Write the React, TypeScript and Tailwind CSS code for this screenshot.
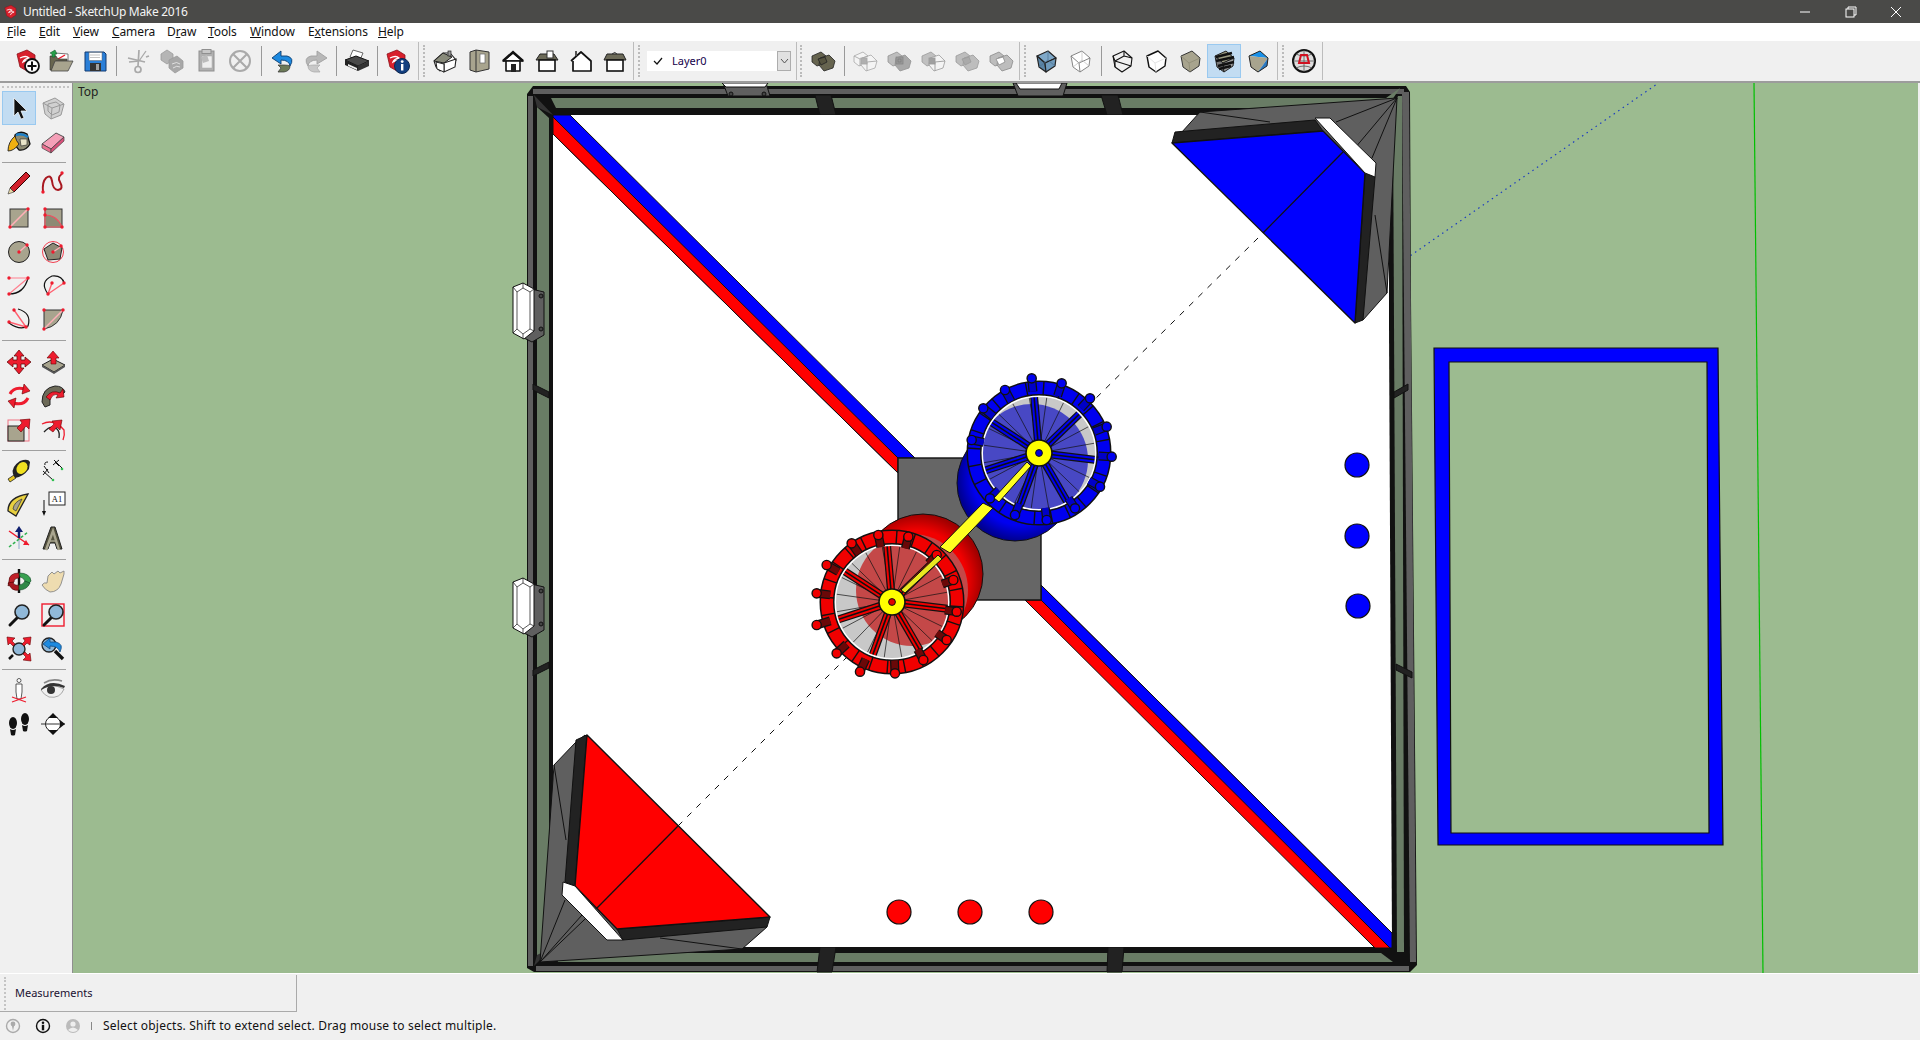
import React from "react";

const T = "#a8a48e";
const R = "#ee1c2e";
const G = "#a9a9a9";
const dot = (x: number, y: number) => <circle cx={x} cy={y} r={1.7} fill={R} />;

const logo = (
  <g>
    <path d="M3 6 L13 2 L21 7 L21 18 L13 23 L6 19 Z" fill="#d8202c" stroke="#8c1018" strokeWidth="0.8" />
    <path d="M6 10 Q12 7 15 10 Q10 11 9 14 Q14 11 18 13 Q13 14 12 18" fill="none" stroke="#fff" strokeWidth="1.3" />
  </g>
);
const cube = (t: string, l: string, r: string, s = "#222", sw = 1) => (
  <g stroke={s} strokeWidth={sw} strokeLinejoin="round">
    <path d="M4 8 L15 3 L23 10 L12 15 Z" fill={t} />
    <path d="M4 8 L12 15 L13 24 L6 19 Z" fill={l} />
    <path d="M12 15 L23 10 L22 18 L13 24 Z" fill={r} />
  </g>
);
const wire = (s = "#222", sw = 1, f = "none") => (
  <g fill={f} stroke={s} strokeWidth={sw} strokeLinejoin="round">
    <path d="M4 8 L15 3 L23 10 L22 18 L13 24 L6 19 Z" />
    <path d="M4 8 L12 15 L13 24 M12 15 L23 10" />
  </g>
);
const wireBack = (s: string, sw: number) => (
  <g fill="none" stroke={s} strokeWidth={sw} strokeLinejoin="round">
    <path d="M4 8 L15 3 L23 10 L22 18 L13 24 L6 19 Z" />
    <path d="M4 8 L6 13 L22 18 M6 13 L6 19 M6 13 L15 8 L15 3 M15 8 L23 10" />
  </g>
);
const compBase = (a: string, a2: string, c: string) => (
  <g stroke={c} strokeWidth="0.8" strokeLinejoin="round">
    <path d="M2 8 L11 4 L16 8 L15 15 L7 18 L2 14 Z" fill={a} />
    <path d="M10 10 L19 7 L25 13 L23 20 L14 23 L9 17 Z" fill={a2} />
  </g>
);
const comp = (a: string, b: string, c: string) => (
  <g>
    {compBase(a, a, c)}
    <path d="M8 11 L15 9 L17 14 L11 17 Z" fill={b} stroke={c} strokeWidth="0.8" />
  </g>
);
const house = (roof: string, wall: string) => (
  <g stroke="#111" strokeWidth="1.6" strokeLinejoin="round">
    <path d="M3 13 L13 5 L23 13 Z" fill={roof} />
    <path d="M6 13 H20 V23 H6 Z" fill={wall} />
  </g>
);
const lens = (
  <g>
    <path d="M4 23 L12 15" stroke="#111" strokeWidth="3" strokeLinecap="round" />
    <circle cx="16" cy="10" r="7" fill="#90b8d8" stroke="#222" strokeWidth="1.6" />
  </g>
);
const arrowHead = (d: string) => <path d={d} fill={R} stroke="#600" strokeWidth="0.6" />;

const icons: Record<string, React.ReactNode> = {
  new: (<g>{logo}<circle cx="18" cy="18" r="7" fill="#fff" stroke="#111" strokeWidth="1.8" /><path d="M18 13.5 V22.5 M13.5 18 H22.5" stroke="#111" strokeWidth="2" /></g>),
  open: (<g><path d="M7 5 L20 6 L20 14 L7 14 Z" fill="#fff" stroke="#777" /><path d="M10 11 L17 7" stroke={R} strokeWidth="1.4" /><path d="M2 8 H8 L10 11 H19 V13 H8 L4 22 H2 Z" fill="#68664e" stroke="#333" strokeWidth="0.6" /><path d="M7 13 H25 L20 23 H3 Z" fill={T} stroke="#444" strokeWidth="0.8" /><path d="M2 5 L7 2 L9 6 L7 6 L7 9 L4 9 L4 6 Z" fill="#27a04a" stroke="#0c5020" strokeWidth="0.5" /></g>),
  save: (<g><path d="M3 4 L22 4 L24 6 L24 23 L3 23 Z" fill="#2a7fd8" stroke="#123a70" /><rect x="7" y="4.5" width="13" height="8" fill="#fff" stroke="#666" strokeWidth="0.5" /><path d="M8 7 H18 M8 9.5 H18" stroke="#aaa" strokeWidth="0.7" /><rect x="8" y="15" width="11" height="8" fill="#333" /><rect x="14" y="16" width="3" height="6" fill="#a0a0a0" /></g>),
  cut: (<g fill="none" stroke={G} strokeWidth="1.7"><path d="M14 2 L13 18 M3 10 L20 14 M21 9 L24 8" /><circle cx="13" cy="21.5" r="3" /><circle cx="22" cy="12" r="0" /><path d="M21 3 L14 13 M14 13 L4 14" strokeWidth="1.3" /></g>),
  copy: (<g fill="#b5b5b5" stroke="#9a9a9a" strokeWidth="0.8"><path d="M2 6 L8 2 L14 6 L14 12 L8 16 L2 12 Z" /><path d="M10 12 L18 8 L24 13 L24 20 L16 25 L10 20 Z" fill="#a8a8a8" /><path d="M13 16 Q18 13 21 16 M14 20 Q18 17 21 19" stroke="#eee" fill="none" /></g>),
  paste: (<g><rect x="6" y="3" width="15" height="20" fill="#b0b0b0" stroke="#8f8f8f" /><rect x="9" y="1.5" width="9" height="4" fill="#c8c8c8" stroke="#8f8f8f" /><rect x="9" y="8" width="10" height="12" fill="#eee" stroke="#aaa" strokeWidth="0.5" /><path d="M8 9 L14 7 L16 13 L10 15 Z" fill="#bbb" /></g>),
  erase: (<g fill="none" stroke="#aaa" strokeWidth="2"><circle cx="13" cy="13" r="10" /><path d="M6 6 L20 20 M20 6 L6 20" /></g>),
  undo: (<g><path d="M12 3 L3 10 L12 16 L12 12 Q20 12 21 18 Q26 10 18 8 L12 8 Z" fill="#1d8ae0" stroke="#0b3d70" strokeWidth="0.9" /><path d="M21 18 Q21 23 15 24 L9 24 L12 20 L9 17 L15 17 Q19 17 21 18 Z" fill="#6c7a58" stroke="#333" strokeWidth="0.7" /></g>),
  redo: (<g><path d="M14 3 L24 10 L14 16 L14 12 Q6 12 5 18 Q0 10 8 8 L14 8 Z" fill="#b8b8b8" stroke="#a0a0a0" strokeWidth="0.9" /><path d="M5 18 Q5 23 11 24 L17 24 L14 20 L17 17 L11 17 Q7 17 5 18 Z" fill="#c8c8c8" stroke="#a8a8a8" strokeWidth="0.7" /></g>),
  print: (<g><path d="M9 2 L19 5 L16 12 L6 9 Z" fill="#fff" stroke="#444" strokeWidth="0.8" /><path d="M1 12 L12 8 L25 13 L14 18 Z" fill="#4a4a4a" stroke="#111" /><path d="M1 12 L14 18 L14 23 L1 17 Z" fill="#222" /><path d="M14 18 L25 13 L25 18 L14 23 Z" fill="#333" /><path d="M4 16 L13 20 L13 22 L4 18 Z" fill="#eee" /></g>),
  info: (<g>{logo}<circle cx="18" cy="18" r="7.5" fill="#123f80" stroke="#0a2750" /><rect x="17" y="16" width="2.4" height="6.5" fill="#fff" /><circle cx="18.2" cy="13.6" r="1.4" fill="#fff" /></g>),
  iso: (<g><path d="M2 13 L11 5 L18 5 L24 12 L14 15 L8 23 L4 19 Z" fill="#fff" stroke="#222" strokeWidth="1.1" /><path d="M2 13 L11 5 L20 9 L12 15 Z" fill="#888a7a" stroke="#222" /><path d="M12 15 L24 11 L23 19 L12 24 Z" fill="#fff" stroke="#222" strokeWidth="1.1" /><path d="M4 14 L12 16 L12 24 L5 21 Z" fill="#fff" stroke="#222" /><rect x="16" y="3" width="3" height="5" fill="#999" stroke="#222" strokeWidth="0.7" /></g>),
  side: (<g><path d="M4 4 L10 2 L23 4 L23 21 L10 24 L4 22 Z" fill={T} stroke="#333" /><path d="M10 2 V24" stroke="#333" /><rect x="14" y="6" width="5" height="9" fill="#fff" stroke="#666" strokeWidth="0.7" /></g>),
  front: (<g>{house("#fff", "#fff")}<path d="M3 13 L13 4 L23 13" fill="none" stroke="#111" strokeWidth="2.4" /><rect x="11" y="16" width="5" height="8" fill="#222" /></g>),
  backh: (<g><path d="M2 12 L6 6 H20 L24 12 Z" fill="#6c6a58" stroke="#222" /><rect x="5" y="12" width="16" height="11" fill="#fff" stroke="#111" strokeWidth="1.6" /><rect x="13" y="3" width="6" height="7" fill="#fff" stroke="#333" /></g>),
  lefth: (<g><path d="M3 13 L13 4 L23 13 V23 H5 V13" fill="#fff" stroke="#111" strokeWidth="1.7" strokeLinejoin="round" /><rect x="7" y="3" width="2" height="5" fill="#555" /></g>),
  righth: (<g><path d="M2 12 L5 6 H21 L24 12 Z" fill="#6c6a58" stroke="#222" /><rect x="5" y="12" width="16" height="11" fill="#fff" stroke="#111" strokeWidth="1.6" /><path d="M10 6 Q13 3 15 6" fill="#777" stroke="#333" /></g>),
  compDark: comp("#66644f", "#55533f", "#222"),
  c1: (<g fill="none" stroke="#a8a8a8" strokeWidth="0.9">{compBase("#f4f4f4", "#f4f4f4", "#a8a8a8")}<path d="M2 8 L8 11 L16 8 M8 11 V18 M10 10 L15 14 L25 13 M15 14 V23" /><rect x="9" y="10" width="6" height="6" fill="#b0b0b0" /></g>),
  c2: (<g>{compBase("#bdbdbd", "#a8a8a8", "#939393")}<rect x="10" y="9" width="7" height="7" fill="#999" stroke="#808080" strokeWidth="0.7" /><rect x="12" y="11" width="3" height="3" fill="none" stroke="#777" strokeWidth="0.6" /></g>),
  c3: (<g fill="none" stroke="#9b9b9b" strokeWidth="0.9">{compBase("#c0c0c0", "#f4f4f4", "#9b9b9b")}<path d="M10 10 L15 14 L25 13 M15 14 V23" /><rect x="9" y="10" width="6" height="6" fill="#a0a0a0" /></g>),
  c4: comp("#bdbdbd", "#aaaaaa", "#9b9b9b"),
  c5: comp("#bdbdbd", "#ffffff", "#8a8a8a"),
  xray: (<g>{cube("#7fa8c8", "#5a84a5", "#6f9abb", "#222", 1.2)}<path d="M15 3 V12 L6 19 M15 12 L22 18" stroke="#4a7090" fill="none" strokeWidth="0.7" /></g>),
  ghost: (<g>{wire("#777", 0.9, "#fff")}<path d="M15 3 V12 L6 19 M15 12 L22 18" stroke="#bbb" fill="none" strokeWidth="0.7" /></g>),
  wireS: wireBack("#111", 1.1),
  hidden: (<g><path d="M4 8 L15 3 L23 10 L22 18 L13 24 L6 19 Z" fill="#fff" stroke="#111" strokeWidth="1.4" strokeLinejoin="round" /><path d="M4 8 L12 15 L23 10 M12 15 L13 24" fill="none" stroke="#ddd" strokeWidth="0.8" /></g>),
  shaded: (<g><path d="M4 8 L15 3 L23 10 L22 18 L13 24 L6 19 Z" fill={T} stroke="#333" strokeLinejoin="round" /><path d="M4 8 L12 15 L23 10 M12 15 L13 24" fill="none" stroke="#8d8a74" strokeWidth="0.8" /></g>),
  tex: (<g>{cube("#9a9a80", "#777", "#999", "#222", 1)}<path d="M5 9 L21 5 M5 13 L23 9 M7 18 L23 14 M8 21 L20 18" stroke="#111" strokeWidth="2.4" /></g>),
  mono: (<g><path d="M4 8 L15 3 L23 10 Z" fill="#1890e8" /><path d="M4 8 L23 10 L13 24 L6 19 Z" fill="#a8a48e" /><path d="M23 10 L22 18 L13 24 Z" fill="#2a78c0" /><path d="M4 8 L15 3 L23 10 L22 18 L13 24 L6 19 Z" fill="none" stroke="#222" /></g>),
  globe: (<g><circle cx="13" cy="13" r="11" fill="#ddd" stroke="#111" strokeWidth="2" /><path d="M2 13 H24 M13 2 V24 M5 6 Q13 10 21 6 M5 20 Q13 16 21 20" fill="none" stroke="#555" strokeWidth="0.8" /><path d="M10 7 H16 L18 15 H8 Z" fill="none" stroke="#d01020" strokeWidth="2" /></g>),
  select: (<g><path d="M8 3 L8 21 L12 17 L15 24 L18 23 L15 16 L21 16 Z" fill="#111" stroke="#fff" strokeWidth="0.7" /></g>),
  component: (<g fill="#d0d0d0" stroke="#9a9a9a" strokeWidth="1"><path d="M3 8 L15 3 L24 9 L21 20 L11 24 L5 19 Z" /><path d="M3 8 L12 13 L24 9 M12 13 L11 24" fill="none" /><path d="M8 9 L16 7 L20 10 L19 17 L12 20 L8 16 Z" fill="none" /></g>),
  paint: (<g><path d="M9 6 Q14 1 21 5 L24 15 Q20 22 13 21 L8 15 Z" fill="#8c8a72" stroke="#111" strokeWidth="1.3" /><path d="M10 6 Q16 4 22 8" stroke="#1c7fc8" strokeWidth="2.5" fill="none" /><path d="M14 10 L21 10 L21 16 L15 17 Z" fill="#e8e4c8" stroke="#222" strokeWidth="0.6" /><path d="M9 7 Q2 13 2 22 Q8 22 13 15 Q10 12 9 7 Z" fill="#f0b010" stroke="#222" strokeWidth="0.9" /></g>),
  eraser: (<g><path d="M2 15 L16 4 L24 8 L11 20 Z" fill="#f4a0b8" stroke="#444" strokeWidth="0.9" /><path d="M2 15 L11 20 L11 24 L2 19 Z" fill="#ee7090" stroke="#444" strokeWidth="0.7" /><path d="M11 20 L24 8 L24 12 L11 24 Z" fill="#d8507a" stroke="#444" strokeWidth="0.7" /></g>),
  pencil: (<g><path d="M20 2 L24 6 L8 22 L4 18 Z" fill="#d01f2a" stroke="#300" strokeWidth="1" /><path d="M4 18 L8 22 L2 24 Z" fill="#e8d8a8" stroke="#333" strokeWidth="0.6" /></g>),
  freehand: (<g><path d="M3 22 Q2 12 6 8 Q11 4 12 11 Q13 20 18 20 Q24 19 20 12 Q17 7 22 4" fill="none" stroke="#a81820" strokeWidth="2" />{dot(3, 22)}{dot(22, 3)}</g>),
  rect: (<g><rect x="4" y="5" width="18" height="18" fill={T} stroke="#333" /><path d="M4 23 L22 5" stroke="#ffb0b8" strokeWidth="1.6" />{dot(4, 23)}{dot(22, 5)}</g>),
  rrect: (<g><rect x="5" y="5" width="17" height="18" fill="#a8a48e" stroke="#333" /><path d="M5 11 Q17 11 22 23 L5 23 Z" fill="#8d8a74" /><path d="M5 23 V5 M5 11 Q17 11 22 23 H5" fill="none" stroke="#f05060" strokeWidth="1.1" />{dot(5, 5)}{dot(5, 11)}{dot(5, 23)}{dot(22, 23)}</g>),
  circle: (<g><circle cx="13" cy="14" r="10.5" fill={T} stroke="#222" /><path d="M13 14 L21 7" stroke="#ffb0b8" strokeWidth="1.5" />{dot(13, 14)}{dot(21, 7)}</g>),
  poly: (<g><circle cx="13" cy="14" r="10.5" fill="none" stroke="#f04050" /><path d="M13 5 L22 10 L20 21 L8 22 L4 11 Z" fill="#8e8a76" stroke="#222" /><path d="M13 14 L22 8" stroke="#ffb0b8" strokeWidth="1.4" />{dot(13, 14)}{dot(21, 8)}</g>),
  arc: (<g><path d="M3 22 Q18 22 22 6" fill="none" stroke="#111" strokeWidth="1.2" /><path d="M3 6 H22 L3 22" fill="none" stroke="#ff8090" strokeWidth="1.2" />{dot(3, 6)}{dot(22, 6)}{dot(3, 22)}</g>),
  arc3: (<g><path d="M8 22 Q-1 10 12 4 Q22 3 24 11" fill="none" stroke="#111" strokeWidth="1.2" /><path d="M8 22 L24 11 M8 22 L12 11" stroke="#ff6070" strokeWidth="1.4" />{dot(8, 22)}{dot(24, 11)}{dot(12, 11)}</g>),
  arcp: (<g><path d="M12 3 Q26 7 22 20 Q14 25 3 17" fill="none" stroke="#111" strokeWidth="1.2" /><path d="M8 4 L20 21 L3 16" fill="none" stroke="#ff6070" strokeWidth="1.4" />{dot(8, 4)}{dot(20, 21)}{dot(3, 16)}</g>),
  pie: (<g><path d="M4 23 V4 H23 Q20 20 4 23 Z" fill={T} stroke="#333" /><path d="M4 23 L23 4" stroke="#ffb0b8" strokeWidth="1.5" />{dot(4, 4)}{dot(23, 4)}{dot(4, 23)}</g>),
  move: (<g fill={R} stroke="#500" strokeWidth="0.7"><path d="M13 1 L18 7 L15 7 L15 11 L19 11 L19 8 L25 13 L19 18 L19 15 L15 15 L15 19 L18 19 L13 25 L8 19 L11 19 L11 15 L7 15 L7 18 L1 13 L7 8 L7 11 L11 11 L11 7 L8 7 Z" /></g>),
  push: (<g><path d="M2 16 L13 10 L25 16 L14 23 Z" fill="#a8a48e" stroke="#222" /><path d="M2 16 L14 23 L14 25 L2 18 Z M14 23 L25 16 L25 18 L14 25 Z" fill="#555" />{arrowHead("M13 2 L19 9 L16 9 L16 15 L11 15 L11 9 L7 9 Z")}</g>),
  rotate: (<g fill="none"><path d="M4 11 Q8 3 19 6" stroke={R} strokeWidth="3" /><path d="M22 15 Q18 23 7 20" stroke={R} strokeWidth="3" />{arrowHead("M18 1 L24 8 L16 11 Z")}{arrowHead("M8 25 L2 18 L10 15 Z")}</g>),
  follow: (<g><path d="M2 19 Q2 5 15 3 Q23 3 25 9 L21 12 Q15 8 10 13 L10 22 L5 24 Z" fill="#6c6a58" stroke="#222" /><path d="M6 14 Q12 6 20 10 L23 6 L24 14 L16 15 L18 12 Q13 10 10 17 Z" fill={R} stroke="#500" strokeWidth="0.6" /></g>),
  scale: (<g><rect x="2" y="3" width="21" height="21" fill="none" stroke="#f07080" /><rect x="2" y="9" width="16" height="15" fill={T} stroke="#222" />{arrowHead("M24 2 L23 12 L20 9 L15 15 L11 11 L16 6 L14 3 Z")}</g>),
  offset: (<g fill="none"><path d="M2 7 Q14 1 24 13 Q25 18 23 23" stroke={R} strokeWidth="1.3" /><path d="M4 15 Q11 7 17 12 Q20 15 19 21" stroke="#222" strokeWidth="1.3" />{arrowHead("M22 3 L20 13 L17 10 L13 15 L9 12 L14 7 L12 4 Z")}</g>),
  tape: (<g><path d="M2 22 L8 18 L10 21 L4 25 Z" fill="#e8c820" stroke="#222" strokeWidth="0.8" /><path d="M7 17 Q5 10 14 4 Q22 1 24 5 L23 12 Q17 20 9 21 Z" fill="#222" /><ellipse cx="16" cy="11" rx="5" ry="6.5" fill="#f0e020" transform="rotate(35 16 11)" /></g>),
  dim: (<g stroke="#111" strokeWidth="1" fill="none"><path d="M3 14 L13 23 M14 3 L23 12 M4 9 L9 16 M15 5 L19 9 M3 18 L8 12 M13 8 L19 3" /><path d="M8 5 Q4 5 5 8" /><circle cx="22" cy="12" r="1.3" fill="#30c050" stroke="none" /><circle cx="13" cy="23" r="1.3" fill="#30c050" stroke="none" /></g>),
  proto: (<g><path d="M2 20 Q2 6 22 3 L10 25 Z" fill="#e8d040" stroke="#222" strokeWidth="1.3" /><path d="M7 18 Q8 11 16 8 L10 20 Z" fill="#a8a48e" stroke="#333" strokeWidth="0.7" /></g>),
  textt: (<g><rect x="9" y="1" width="16" height="13" fill="#fff" stroke="#222" /><text x="17" y="11" textAnchor="middle" fontSize="8.5" fontFamily="'Liberation Serif', serif" fill="#111">A1</text><path d="M4 9 V22" stroke="#111" /><path d="M2 20 H6 L4 25 Z" fill="#111" /></g>),
  axes: (<g strokeWidth="1.5"><path d="M13 13 V24" stroke="#b0c0d8" /><path d="M13 13 L3 6 M13 13 L23 20" stroke={R} /><path d="M3 22 L22 7" stroke="#30b050" strokeDasharray="3 2" /><path d="M13 13 V5" stroke="#102070" strokeWidth="2.5" /><path d="M13 1 L17 7 H9 Z" fill="#102070" /><path d="M23 20 L17 20 L20 15 Z" fill={R} /></g>),
  text3d: (<g><path d="M3 24 L11 2 H15 L22 24 H17 L15 18 H10 L8 24 Z" fill="#55533f" stroke="#222" /><path d="M6 25 L13 6 L19 25" fill="none" stroke="#aaa690" strokeWidth="2.4" /><path d="M10 16 H16" stroke="#aaa690" strokeWidth="1.4" /></g>),
  orbit: (<g><path d="M13 1 V25" stroke="#111" strokeWidth="2.4" /><path d="M3 13 Q3 5 13 5 L13 10 Q8 10 8 14 L2 18 Z" fill="#c02028" stroke="#400" strokeWidth="0.6" /><path d="M13 5 Q24 5 25 13 L20 19 L19 13 Q17 9 14 9 Z" fill="#38a050" stroke="#0a4020" strokeWidth="0.6" /><path d="M2 15 Q6 24 13 22 L13 17 Q8 18 7 14 Z" fill="#a81820" stroke="#400" strokeWidth="0.6" /><path d="M13 22 Q21 22 24 15 L19 13 Q17 17 13 17 Z" fill="#308848" stroke="#0a4020" strokeWidth="0.6" /></g>),
  pan: (<g><path d="M2 17 Q4 14 7 15 L8 8 L12 4 L14 6 L18 3 L20 5 L24 3 L24 6 L21 16 Q18 24 10 24 Q5 22 2 17 Z" fill="#eedcb0" stroke="#888" strokeWidth="0.9" /></g>),
  zoom: lens,
  zoomw: (<g><rect x="2" y="2" width="22" height="22" fill="none" stroke={R} strokeWidth="1.4" />{lens}</g>),
  zoomx: (<g><path d="M7 19 L3 23" stroke="#111" strokeWidth="2.5" /><circle cx="13" cy="13" r="6" fill="#90b8d8" stroke="#222" strokeWidth="1.4" />{arrowHead("M1 1 L9 2 L6 5 L9 8 L7 10 L4 7 L2 9 Z")}{arrowHead("M25 1 L24 9 L21 7 L18 10 L16 8 L19 5 L17 2 Z")}{arrowHead("M25 25 L17 24 L20 21 L17 18 L19 16 L22 19 L24 17 Z")}</g>),
  prev: (<g><circle cx="9" cy="9" r="7" fill="#90b8d8" stroke="#222" strokeWidth="1.3" /><path d="M15 15 L23 23" stroke="#111" strokeWidth="3.4" /><path d="M10 2 L3 8 L10 13 L10 10 Q18 10 20 16 Q24 8 16 6 L10 6 Z" fill="#1d8ae0" stroke="#0b3d70" strokeWidth="0.7" /></g>),
  person: (<g><circle cx="13" cy="3.5" r="2" fill="#fff" stroke="#333" strokeWidth="0.8" /><path d="M10 7 H16 L16 15 L15 22 H11 L10 15 Z" fill="#fff" stroke="#333" strokeWidth="0.8" /><path d="M6 20 L20 25 M20 20 L6 25" stroke={R} strokeWidth="1.2" /></g>),
  eye: (<g><path d="M1 13 Q10 5 24 12 Q20 22 9 20 Q4 18 1 13 Z" fill="#f0f0f0" stroke="#888" strokeWidth="0.7" /><path d="M1 12 Q10 2 25 9 L24 11 Q12 6 1 13 Z" fill="#333" /><path d="M4 6 Q12 1 22 4" fill="none" stroke="#888" strokeWidth="1.6" /><circle cx="11" cy="13" r="4" fill="#333" /></g>),
  walk: (<g fill="#111"><ellipse cx="7" cy="12" rx="4" ry="6" /><path d="M4 18 Q7 20 10 18 L9 24 Q7 25 5 24 Z" /><ellipse cx="19" cy="8" rx="4" ry="6" /><path d="M16 14 Q19 16 22 14 L21 20 Q19 21 17 20 Z" /></g>),
  section: (<g><circle cx="13" cy="13" r="7.5" fill="#fff" stroke="#222" /><path d="M1 13 H25" stroke="#333" /><path d="M13 2 L18 7 H8 Z M13 24 L18 19 H8 Z" fill="#111" /><path d="M25 13 L20 9 V17 Z" fill="#111" /></g>),
};

const Btn = ({ n, on }: { n: string; on?: boolean }) => (
  <div className={`flex h-[34px] w-[34px] items-center justify-center ${on ? "border border-[#99c9f0] bg-[#c2dcf2]" : ""}`}>
    <svg width="26" height="26" viewBox="0 0 26 26">{icons[n]}</svg>
  </div>
);
const Sep = ({ w }: { w: string }) => (
  <div className={`flex h-[30px] justify-center ${w}`}><div className="h-full w-px bg-[#999]" /></div>
);
const Grip = ({ c }: { c: string }) => <div className={`h-[32px] border-l-2 border-dotted border-[#bbb] ${c}`} />;
const Div = ({ c }: { c: string }) => <div className={`h-[38px] w-px bg-[#bcbcbc] ${c}`} />;

const blueKnobs = [[755, 55], [845, 70], [930, 115], [980, 200], [995, 290], [960, 380], [885, 445], [800, 480], [705, 465], [630, 415], [575, 240], [610, 145], [675, 90]];
const redKnobs = [[215, 550], [140, 615], [110, 700], [110, 795], [170, 880], [240, 935], [345, 940], [430, 900], [500, 840], [530, 755], [520, 660], [470, 585], [385, 530], [295, 525]];
const spokes = [265, 213, 162, 110, 60, 7, 316];
const rad = (d: number) => (d * Math.PI) / 180;

const Wheel = (p: { cx: number; cy: number; c: string; stem: string; disc: string; dx: number; dy: number; knobs: number[][]; hub: string }) => {
  const pt = (r: number, a: number) => [p.cx + r * Math.cos(rad(a)), p.cy + r * Math.sin(rad(a))];
  return (
    <g>
      <circle cx={p.cx} cy={p.cy} r={60} fill="#c8c8c8" stroke="#111" strokeWidth="1" />
      <circle cx={p.dx} cy={p.dy} r={56} fill={p.disc} />
      {Array.from({ length: 20 }, (_, i) => {
        const [a, b] = pt(12, i * 18 + 8);
        const [c, d] = pt(56, i * 18 + 8);
        return <line key={i} x1={a} y1={b} x2={c} y2={d} stroke="#111" strokeWidth="0.7" />;
      })}
      {spokes.map((s) => {
        const [a, b] = pt(10, s);
        const [c, d] = pt(60, s);
        return (
          <g key={s}>
            <line x1={a} y1={b} x2={c} y2={d} stroke="#111" strokeWidth="8" />
            <line x1={a} y1={b} x2={c} y2={d} stroke={p.c} strokeWidth="5.5" />
            <line x1={a} y1={b} x2={c} y2={d} stroke="#111" strokeWidth="1.6" />
          </g>
        );
      })}
      <circle cx={p.cx} cy={p.cy} r={57} fill="none" stroke="#fff" strokeWidth="2" />
      <circle cx={p.cx} cy={p.cy} r={65} fill="none" stroke="#111" strokeWidth="15" />
      <circle cx={p.cx} cy={p.cy} r={65} fill="none" stroke={p.c} strokeWidth="12" />
      {Array.from({ length: 24 }, (_, i) => {
        const [a, b] = pt(58, i * 15 + 4);
        const [c, d] = pt(72, i * 15 + 4);
        return <line key={i} x1={a} y1={b} x2={c} y2={d} stroke="#111" strokeWidth="1.4" />;
      })}
      {p.knobs.map(([x, y], i) => {
        const kx = 780 + x / 3;
        const ky = 360 + y / 3;
        const ix = kx + (p.cx - kx) * 0.18;
        const iy = ky + (p.cy - ky) * 0.18;
        return (
          <g key={i}>
            <line x1={kx} y1={ky} x2={ix} y2={iy} stroke="#111" strokeWidth="9" />
            <line x1={kx} y1={ky} x2={ix} y2={iy} stroke={p.stem} strokeWidth="6.5" />
            <circle cx={kx} cy={ky} r="4.6" fill={p.c} stroke="#111" strokeWidth="1.4" />
          </g>
        );
      })}
      <circle cx={p.cx} cy={p.cy} r={13} fill="#ffff00" stroke="#111" strokeWidth="1.6" />
      <circle cx={p.cx} cy={p.cy} r={3.4} fill={p.hub} stroke="#111" strokeWidth="1" />
    </g>
  );
};

const Clip = ({ y }: { y: number }) => (
  <g stroke="#111" strokeWidth="1">
    <path d={`M527 ${y + 5} L544 ${y + 9} V${y + 52} L532 ${y + 59} L522 ${y + 54} Z`} fill="#5f5f5f" />
    <path d={`M513 ${y + 4} L523 ${y} L534 ${y + 6} V${y + 48} L524 ${y + 56} L513 ${y + 50} Z`} fill="#fff" />
    <path d={`M517 ${y + 9} L523 ${y + 5} L530 ${y + 9} V${y + 46} L523 ${y + 51} L517 ${y + 46} Z M513 ${y + 4} L517 ${y + 9} M534 ${y + 6} L530 ${y + 9} M513 ${y + 50} L517 ${y + 46} M534 ${y + 48} L530 ${y + 46} M523 ${y} V${y + 5} M523 ${y + 51} V${y + 56}`} fill="none" strokeWidth="0.7" />
    <circle cx="541" cy={y + 13} r="2" fill="#444" />
    <circle cx="541" cy={y + 46} r="2" fill="#444" />
  </g>
);

const Scene = () => (
  <svg width="1845" height="890" viewBox="73 83 1845 890" className="absolute inset-0">
    <defs>
      <radialGradient id="rs" cx="0.45" cy="0.55" r="0.55"><stop offset="0.75" stopColor="#f20000" /><stop offset="1" stopColor="#a00000" /></radialGradient>
      <radialGradient id="bs" cx="0.55" cy="0.45" r="0.55"><stop offset="0.75" stopColor="#0000f0" /><stop offset="1" stopColor="#000090" /></radialGradient>
    </defs>
    <line x1="1754" y1="83" x2="1763" y2="973" stroke="#00c000" strokeWidth="1.2" />
    <line x1="1397" y1="265" x2="1657" y2="84" stroke="#1a3ac0" strokeWidth="1.2" strokeDasharray="1.5 4" />
    <path d="M1434 348 L1718 348 L1723 845 L1438 845 Z M1449 362 L1451 833 L1709 833 L1707 362 Z" fill="#0000ff" stroke="#111" strokeWidth="1.2" fillRule="evenodd" />

    <path d="M533 86 L1406 86 L1410 92 L1411 300 L1417 965 L1410 972 L534 972 L527 968 L527 94 Z" fill="#111" />
    <path d="M533 89 H1404 V94 H533 Z" fill="#5f5f5f" />
    <path d="M551 98 H1386 L1400 88 L1392 100 L1388 108 H556 Z" fill="#697c65" />
    <path d="M528 96 H533 V966 H528 Z" fill="#5f5f5f" />
    <path d="M537 107 L549 118 V955 H537 Z" fill="#697c65" />
    <path d="M534 95 L553 115 L537 107 Z M534 966 L553 947 L537 955 Z" fill="#333" />
    <path d="M1393 112 L1398 96 L1402 96 L1404 952 L1397 952 Z" fill="#697c65" />
    <path d="M1402 92 H1409 L1416 962 H1410 Z" fill="#5f5f5f" />
    <path d="M556 953 H1381 L1393 962 H558 Z" fill="#697c65" />
    <path d="M536 966 H1409 V971 H536 Z" fill="#5f5f5f" />
    <path d="M815 95 H831 L836 115 H820 Z M1101 95 H1118 L1123 115 H1107 Z M820 947 H836 L832 972 H817 Z M1108 947 H1124 L1122 972 H1107 Z" fill="#222" stroke="#111" />
    <path d="M533 384 L549 392 V398 L533 390 Z M533 670 L549 662 V668 L533 676 Z M1394 392 L1408 384 V390 L1394 398 Z M1396 664 L1412 672 V678 L1396 670 Z" fill="#222" stroke="#111" />

    <rect x="553" y="115" width="836" height="832" fill="#fff" />
    <path d="M1388 115 L1392 947 L1385 947 L1385 115 Z" fill="#fff" />
    <path d="M553 115 H570 L915 458 H898 V473 L553 134 Z" fill="#0000ff" stroke="#111" strokeWidth="1" />
    <path d="M553 117 L898 458 V473 L553 134 Z" fill="#ff0000" stroke="#111" strokeWidth="1" />
    <path d="M1041 585 L1392 933 V948 H1375 L1025 600 H1041 Z" fill="#ff0000" stroke="#111" strokeWidth="1" />
    <path d="M1041 585 L1392 933 V948 H1390 L1041 600 Z" fill="#0000ff" stroke="#111" strokeWidth="1" />

    <g stroke="#111" strokeWidth="1" fill="#5f5f5f">
      <path d="M1200 112 L1397 98 L1387 293 L1363 320 L1172 143 Z" />
      <path d="M1397 98 L1336 122 M1397 98 L1355 148 M1397 98 L1372 158 M1200 112 L1270 122 M1375 215 L1387 293" fill="none" />
      <path d="M1172 143 L1175 132 L1315 120 L1323 131 Z M1365 173 L1375 177 L1363 320 L1355 323 Z" fill="#222" />
    </g>
    <path d="M1172 143 L1323 131 L1365 173 L1355 323 Z" fill="#0000ff" stroke="#111" strokeWidth="1.4" strokeLinejoin="round" />
    <path d="M1315 118 L1330 118 L1376 163 L1375 177 L1365 173 Z" fill="#fff" stroke="#111" strokeWidth="1" />
    <line x1="1343" y1="152" x2="1263" y2="233" stroke="#111" strokeWidth="1.3" />

    <g stroke="#111" strokeWidth="1" fill="#5f5f5f">
      <path d="M575 743 L554 765 L540 962 L742 949 L767 927 L585 735 Z" />
      <path d="M540 962 L605 900 M540 962 L582 915 M540 962 L565 900 M554 765 L566 840 M742 949 L660 938" fill="none" />
      <path d="M587 735 L576 740 L565 882 L575 886 Z M617 929 L623 940 L767 927 L770 917 Z" fill="#222" />
    </g>
    <path d="M587 735 L770 917 L617 929 L575 886 Z" fill="#ff0000" stroke="#111" strokeWidth="1.4" strokeLinejoin="round" />
    <path d="M563 882 L575 886 L623 940 L607 940 L562 895 Z" fill="#fff" stroke="#111" strokeWidth="1" />
    <line x1="678" y1="826" x2="597" y2="908" stroke="#111" strokeWidth="1.3" />

    <line x1="1258" y1="238" x2="1086" y2="408" stroke="#111" strokeWidth="1" strokeDasharray="6 7" />
    <line x1="678" y1="826" x2="852" y2="652" stroke="#111" strokeWidth="1" strokeDasharray="6 7" />

    <rect x="898" y="458" width="143" height="142" fill="#666" stroke="#111" strokeWidth="1.4" />

    <circle cx="1015" cy="483" r="58" fill="url(#bs)" stroke="#111" strokeWidth="1" />
    <circle cx="923" cy="574" r="60" fill="url(#rs)" stroke="#111" strokeWidth="1" />
    <Wheel cx={1039} cy={453} c="#0000f0" stem="#0000c8" disc="#4848c4" dx={1032} dy={460} knobs={blueKnobs} hub="#0000e0" />
    <Wheel cx={892} cy={602} c="#f00000" stem="#6a0808" disc="#c44848" dx={912} dy={590} knobs={redKnobs} hub="#e00000" />

    <path d="M983 503 L993 508 L950 553 L940 547 Z" fill="#ffff20" stroke="#111" strokeWidth="1" />
    <path d="M1027 462 L1031 466 L999 502 L994 498 Z" fill="#ffff20" stroke="#111" strokeWidth="1" />
    <path d="M938 555 L942 559 L905 593 L901 590 Z" fill="#e8e820" stroke="#111" strokeWidth="1" />

    <Clip y={283} />
    <Clip y={578} />
    <g stroke="#111" strokeWidth="1">
      <path d="M723 83 L728 96 L770 96 L766 83 Z" fill="#5f5f5f" />
      <path d="M722 83 H768 L765 87 H726 Z" fill="#fff" />
      <circle cx="731" cy="94" r="2" fill="#444" />
      <circle cx="764" cy="94" r="2" fill="#444" />
      <path d="M1013 83 L1018 96 L1063 96 L1067 83 Z" fill="#5f5f5f" />
      <path d="M1016 83 H1062 L1059 89 H1020 Z" fill="#fff" />
    </g>

    {[[1357, 465], [1357, 536], [1358, 606]].map(([x, y]) => <circle key={y} cx={x} cy={y} r="12" fill="#0000ff" stroke="#111" strokeWidth="1.2" />)}
    {[[899, 912], [970, 912], [1041, 912]].map(([x, y]) => <circle key={x} cx={x} cy={y} r="12" fill="#ff0000" stroke="#111" strokeWidth="1.2" />)}
  </svg>
);

const U = ({ t }: { t: string }) => <span className="underline">{t}</span>;
const menu = [
  { w: "w-[32px]", n: <><U t="F" />ile</> },
  { w: "w-[34px]", n: <><U t="E" />dit</> },
  { w: "w-[39px]", n: <><U t="V" />iew</> },
  { w: "w-[55px]", n: <><U t="C" />amera</> },
  { w: "w-[41px]", n: <>D<U t="r" />aw</> },
  { w: "w-[42px]", n: <><U t="T" />ools</> },
  { w: "w-[58px]", n: <><U t="W" />indow</> },
  { w: "w-[70px]", n: <>E<U t="x" />tensions</> },
  { w: "w-[30px]", n: <><U t="H" />elp</> },
];

const leftGroups = [
  ["select", "component", "paint", "eraser"],
  ["pencil", "freehand", "rect", "rrect", "circle", "poly", "arc", "arc3", "arcp", "pie"],
  ["move", "push", "rotate", "follow", "scale", "offset"],
  ["tape", "dim", "proto", "textt", "axes", "text3d"],
  ["orbit", "pan", "zoom", "zoomw", "zoomx", "prev"],
  ["person", "eye", "walk", "section"],
];
const gapH = ["h-[7px]", "h-[9px]", "h-[6px]", "h-[9px]", "h-[7px]", "h-0"];

export default function App() {
  return (
    <div className="flex h-[1040px] w-[1920px] flex-col overflow-hidden bg-[#f0f0f0] font-['Noto_Sans',sans-serif] text-[12px] text-[#111]">
      <div className="flex h-[23px] items-center bg-[#4a4a48] text-[#f4f4f4]">
        <svg width="16" height="18" viewBox="0 0 26 26" className="ml-[3px]">{logo}</svg>
        <span className="ml-[4px] text-[12px] tracking-[-0.3px]">Untitled - SketchUp Make 2016</span>
        <div className="ml-auto flex">
          <div className="flex w-[46px] justify-center"><svg width="12" height="12" viewBox="0 0 12 12"><path d="M1 6 H11" stroke="#fff" /></svg></div>
          <div className="flex w-[46px] justify-center"><svg width="12" height="12" viewBox="0 0 12 12" fill="none" stroke="#fff"><rect x="1" y="3" width="8" height="8" /><path d="M3 3 V1 H11 V9 H9" /></svg></div>
          <div className="flex w-[46px] justify-center pr-[2px]"><svg width="12" height="12" viewBox="0 0 12 12"><path d="M1 1 L11 11 M11 1 L1 11" stroke="#fff" /></svg></div>
        </div>
      </div>

      <div className="flex h-[18px] items-center bg-white pl-[7px] tracking-[-0.1px]">
        {menu.map((m) => (
          <span key={m.w} className={`leading-none ${m.w}`}>{m.n}</span>
        ))}
      </div>

      <div className="flex h-[40px] items-center bg-[#f0f0f0] pl-[10px]">
        <Btn n="new" /><Btn n="open" /><Btn n="save" />
        <Sep w="w-[9px]" />
        <Btn n="cut" /><Btn n="copy" /><Btn n="paste" /><Btn n="erase" />
        <Sep w="w-[8px]" />
        <Btn n="undo" /><Btn n="redo" />
        <Sep w="w-[7px]" />
        <Btn n="print" />
        <Sep w="w-[6px]" />
        <Btn n="info" />
        <Div c="ml-[4px]" />
        <Grip c="ml-[4px] mr-[3px]" />
        <Btn n="iso" /><Btn n="side" /><Btn n="front" /><Btn n="backh" /><Btn n="lefth" /><Btn n="righth" />
        <Div c="ml-px" />
        <Grip c="ml-[4px]" />
        <div className="ml-[7px] flex h-[20px] w-[144px] items-center bg-white">
          <svg width="10" height="10" viewBox="0 0 10 10" className="ml-[6px]"><path d="M1 5 L4 8 L9 2" fill="none" stroke="#111" strokeWidth="1.2" /></svg>
          <span className="ml-[9px] text-[11px] text-[#14004a]">Layer0</span>
          <div className="ml-auto flex h-[20px] w-[14px] items-center justify-center border border-[#adadad] bg-[#e1e1e1]">
            <svg width="9" height="6" viewBox="0 0 9 6"><path d="M1 1 L4.5 5 L8 1" fill="none" stroke="#555" /></svg>
          </div>
        </div>
        <Div c="ml-[5px]" />
        <Grip c="ml-[3px] mr-[4px]" />
        <Btn n="compDark" />
        <Sep w="w-[8px]" />
        <Btn n="c1" /><Btn n="c2" /><Btn n="c3" /><Btn n="c4" /><Btn n="c5" />
        <Div c="ml-px" />
        <Grip c="ml-[4px] mr-[3px]" />
        <Btn n="xray" /><Btn n="ghost" />
        <Sep w="w-[8px]" />
        <Btn n="wireS" /><Btn n="hidden" /><Btn n="shaded" /><Btn n="tex" on /><Btn n="mono" />
        <Div c="ml-[2px]" />
        <Grip c="ml-[4px] mr-[3px]" />
        <Btn n="globe" />
        <Div c="ml-px" />
      </div>

      <div className="h-[2px] bg-[#9c9c9c]" />

      <div className="flex h-[890px]">
        <div className="w-[73px] shrink-0 border-r border-[#8f8f8f] bg-[#f0f0f0] pl-[2px] pr-[3px]">
          <div className="mb-[3px] h-[5px] border-b-2 border-dotted border-[#c4c4c4]" />
          {leftGroups.map((g, i) => (
            <div key={i}>
              <div className="grid w-[68px] grid-cols-2">
                {g.map((n) => <Btn key={n} n={n} on={n === "select"} />)}
              </div>
              <div className={`flex items-center ${gapH[i]}`}>{i < 5 && <div className="h-px w-[64px] bg-[#a0a0a0]" />}</div>
            </div>
          ))}
        </div>
        <div className="relative flex-1 overflow-hidden bg-[#9cbb90]">
          <Scene />
          <span className="absolute left-[5px] top-0 text-[12px] text-[#222]">Top</span>
        </div>
        <div className="w-[2px] bg-[#f0f0f0]" />
      </div>

      <div className="h-px bg-white" />
      <div className="mt-px flex h-[37px] w-[297px] items-center border-b border-r border-[#aaa] bg-[#f0f0f0]">
        <div className="ml-[4px] h-[33px] border-l-2 border-dotted border-[#c4c4c4]" />
        <span className="ml-[9px] text-[11px] text-[#1a1030]">Measurements</span>
      </div>
      <div className="flex h-[28px] items-center">
        <svg width="16" height="16" viewBox="0 0 16 16" className="ml-[5px]"><circle cx="8" cy="8" r="6.5" fill="none" stroke="#aaa" strokeWidth="1.4" /><circle cx="8" cy="6" r="2.4" fill="#aaa" /><path d="M7 8 H9 L8 13 Z" fill="#aaa" /></svg>
        <svg width="16" height="16" viewBox="0 0 16 16" className="ml-[14px]"><circle cx="8" cy="8" r="6.5" fill="none" stroke="#111" strokeWidth="1.4" /><circle cx="8" cy="4.8" r="1.3" fill="#111" /><rect x="6.8" y="6.8" width="2.4" height="5.5" fill="#111" /></svg>
        <svg width="16" height="16" viewBox="0 0 16 16" className="ml-[14px]"><circle cx="8" cy="8" r="7" fill="#bbb" /><circle cx="8" cy="6" r="2.6" fill="#eee" /><path d="M3 12 Q8 7 13 12 Q8 16 3 12 Z" fill="#eee" /></svg>
        <div className="ml-[10px] h-[8px] w-px bg-[#888]" />
        <span className="ml-[11px] text-[12px] tracking-[0.2px] text-[#111]">Select objects. Shift to extend select. Drag mouse to select multiple.</span>
      </div>
    </div>
  );
}
